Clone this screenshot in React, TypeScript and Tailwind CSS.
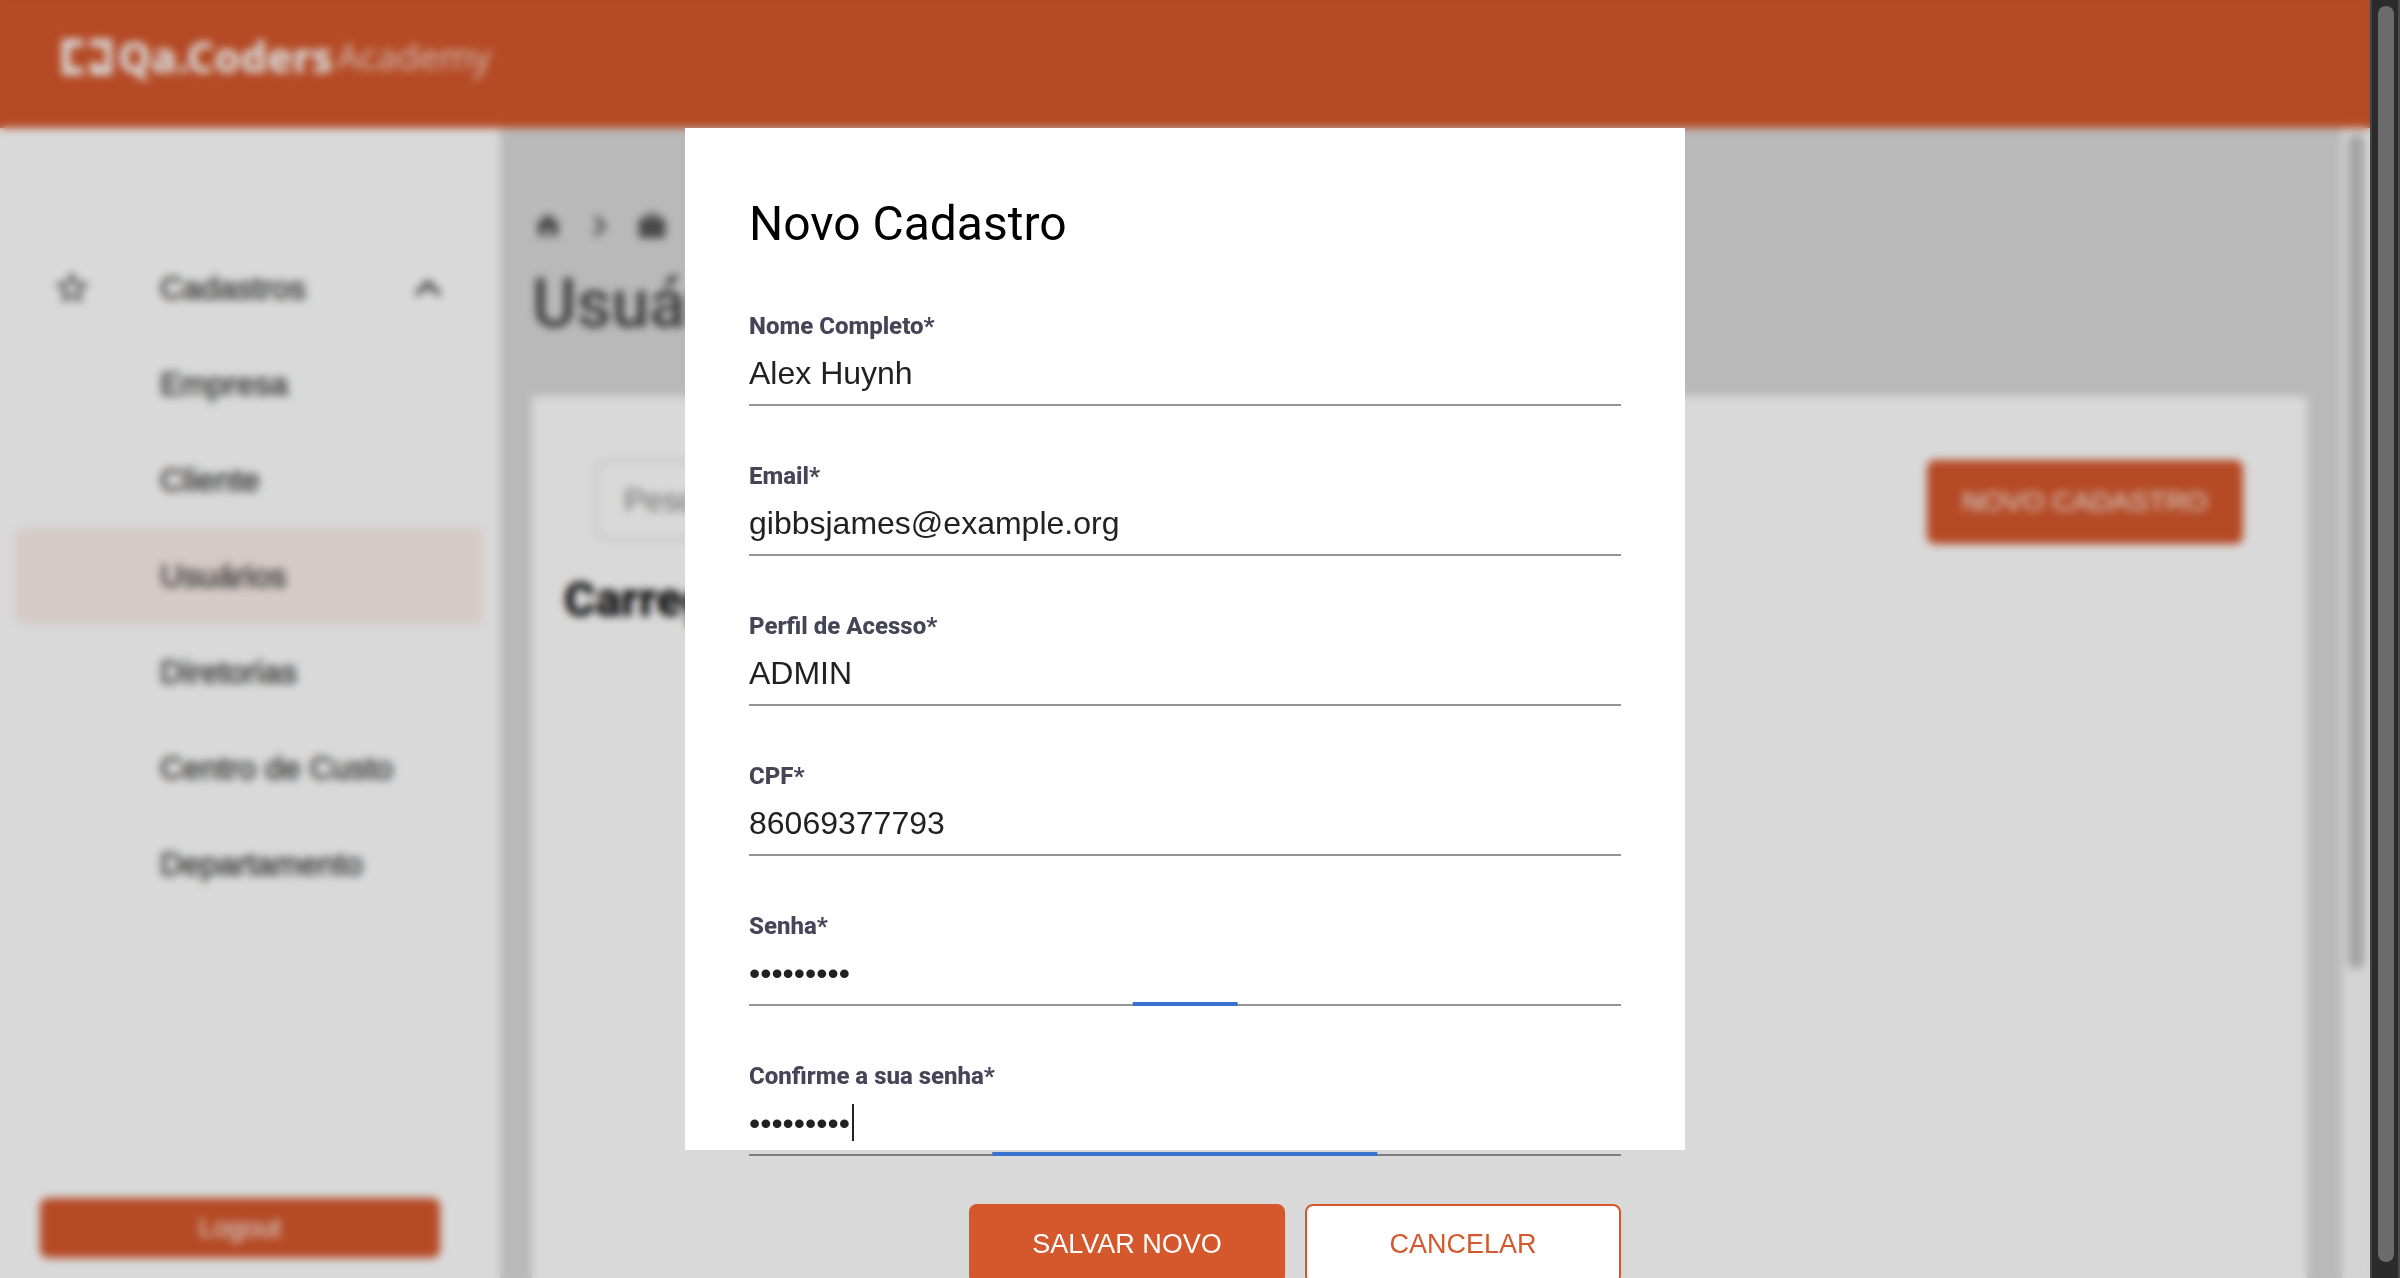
import { ChevronRight, ChevronUp } from "lucide-react";
import { MdHome, MdWork, MdStarBorder, MdPerson } from "react-icons/md";

const menu = ["Empresa", "Cliente", "Usuários", "Diretorias", "Centro de Custo", "Departamento"];

type FieldProps = { id: string; label: string; type?: string; value: string; bar?: string; caret?: boolean };

const fields: FieldProps[] = [
  { id: "nome", label: "Nome Completo*", value: "Alex Huynh" },
  { id: "email", label: "Email*", value: "gibbsjames@example.org" },
  { id: "perfil", label: "Perfil de Acesso*", value: "ADMIN" },
  { id: "cpf", label: "CPF*", value: "86069377793" },
  { id: "senha", label: "Senha*", type: "password", value: "abcdefghi", bar: "12%" },
  { id: "confirme", label: "Confirme a sua senha*", type: "password", value: "abcdefghi", bar: "44.2%", caret: true },
];

function Field({ id, label, type = "text", value, bar, caret }: FieldProps) {
  return (
    <div className="relative flex flex-col">
      <label htmlFor={id} className="text-[24px] leading-[28px] font-extrabold text-[#464457]">
        {label}
      </label>
      <input
        id={id}
        type={type}
        defaultValue={value}
        className="h-[66px] w-full border-b-2 border-black/42 bg-transparent pt-1 font-['Liberation_Sans',Arial,sans-serif] text-[32px] text-[#212121] outline-none"
      />
      {bar && (
        <span className="absolute bottom-0 left-1/2 h-1 -translate-x-1/2 bg-[#3873ce]" style={{ width: bar }} />
      )}
      {caret && <span className="absolute bottom-[15px] left-[103px] h-[37px] w-0.5 bg-[#212121]" />}
    </div>
  );
}

function Logo() {
  return (
    <div className="flex items-center text-white">
      <svg viewBox="0 0 50 36" className="h-9 w-[50px]" fill="currentColor" aria-hidden="true">
        <path d="M0 0H21V8H8V28H21V36H0Z" />
        <path d="M28 0H50V36H28V23H34L40 28H43V8H28Z" />
      </svg>
      <span className="ml-1.5 font-['Noto_Sans','Open_Sans',sans-serif] text-[42px] leading-[60px] font-extrabold">
        Qa.Coders
      </span>
      <span className="ml-1 font-['Open_Sans',sans-serif] text-[36px] leading-[60px] font-normal text-white/80">
        Academy
      </span>
    </div>
  );
}

function Sidebar() {
  return (
    <aside className="flex w-[500px] shrink-0 flex-col bg-white px-4 pt-28 pb-5">
      <nav className="flex flex-col font-['Liberation_Sans',Arial,sans-serif] text-[32px] text-[#4a4a4a] [-webkit-text-stroke:1px_#4a4a4a]">
        <button className="flex h-24 items-center pr-9 pl-9 text-left">
          <MdStarBorder className="size-10 text-[#444]" />
          <span className="ml-17 flex-1">Cadastros</span>
          <ChevronUp className="size-10" strokeWidth={3} />
        </button>
        {menu.map((item) => (
          <a
            key={item}
            href="#"
            className={
              item === "Usuários"
                ? "flex h-24 items-center rounded-md bg-[#fbeeea] pl-36"
                : "flex h-24 items-center pl-36"
            }
          >
            {item}
          </a>
        ))}
      </nav>
      <button className="mt-auto mr-11 ml-6 h-15 rounded-lg bg-[#d5572c] font-['Liberation_Sans',Arial,sans-serif] text-[27px] text-white">
        Logout
      </button>
    </aside>
  );
}

function Content() {
  return (
    <main className="flex min-w-0 flex-1 flex-col bg-[#dadada] pt-20 pr-[35px] pl-8">
      <div className="flex h-9 items-center gap-5 text-[#555]">
        <MdHome className="size-8" />
        <ChevronRight className="size-8" strokeWidth={3} />
        <MdWork className="size-8" />
        <MdPerson className="size-8" />
      </div>
      <h1 className="mt-4 text-[68px] leading-[88px] font-medium text-[#444]">Usuários</h1>
      <section className="mt-12 flex flex-1 flex-col rounded-t-md bg-white px-8 pt-16">
        <div className="flex justify-between px-8">
          <input
            aria-label="Pesquisar"
            placeholder="Pesquisar"
            className="h-20 w-[520px] rounded-lg border-2 border-[#dadada] px-[26px] font-['Liberation_Sans',Arial,sans-serif] text-[32px] placeholder:text-[#7a7a7a]"
          />
          <button className="h-21 w-[316px] rounded-lg bg-[#d5572c] font-['Liberation_Sans',Arial,sans-serif] text-[28px] text-white">
            NOVO CADASTRO
          </button>
        </div>
        <h2 className="mt-6 text-[48px] leading-[64px] font-extrabold text-black">Carregando...</h2>
      </section>
    </main>
  );
}

export default function App() {
  return (
    <div className="flex h-screen overflow-hidden font-[Roboto,sans-serif]">
      <div className="relative flex min-w-0 flex-1 flex-col">
        <header className="flex h-32 shrink-0 items-start bg-[#d5572c] px-[62px] pt-[27px]">
          <Logo />
        </header>
        <div className="flex min-h-0 flex-1">
          <Sidebar />
          <Content />
          <div className="w-7 shrink-0 bg-[#fafafa] px-1.5 pt-1.5">
            <div className="h-[73%] rounded-full bg-[#c1c1c1]" />
          </div>
        </div>

        <div className="absolute inset-0 flex items-center justify-center bg-black/15 backdrop-blur-[4px]">
          <form role="dialog" aria-label="Novo Cadastro" className="h-4/5 w-[1000px] bg-white p-16">
            <h2 className="text-[48px] leading-[64px] text-black">Novo Cadastro</h2>
            <div className="mt-14 flex flex-col gap-14">
              {fields.map((f) => (
                <Field key={f.id} {...f} />
              ))}
            </div>
            <div className="mt-12 flex justify-end gap-5 font-['Liberation_Sans',Arial,sans-serif] text-[27px]">
              <button type="button" className="h-20 w-[316px] rounded-lg bg-[#d5572c] text-white">
                SALVAR NOVO
              </button>
              <button type="button" className="h-20 w-[316px] rounded-lg border-2 border-[#d5572c] bg-white text-[#d5572c]">
                CANCELAR
              </button>
            </div>
          </form>
        </div>
      </div>
      <div className="w-[30px] shrink-0 border-x-2 border-l-[#404343] border-r-[#4b4b48] bg-[#2b2b2b] px-1 pt-1.5 pb-4">
        <div className="ml-0.5 h-full w-4 rounded-full bg-[#6b6b6b]" />
      </div>
    </div>
  );
}
